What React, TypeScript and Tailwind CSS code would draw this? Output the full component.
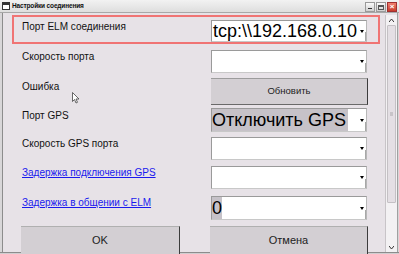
import React from "react";

const Arrow = () => (
  <svg width="4" height="3" viewBox="0 0 4 3" className="shrink-0">
    <path d="M0 0 H4 L2 3 Z" fill="#000" />
  </svg>
);

const Combo = ({ children, h = "h-[23px]" }: { children?: React.ReactNode; h?: string }) => (
  <div className={`w-[156px] ${h} bg-white border-t border-l border-[#9a9a9a] border-r border-b border-r-[#b8b8b8] border-b-[#c8c8c8] flex items-center relative`}>
    <div className="flex-1 min-w-0 h-full flex items-center overflow-hidden">{children}</div>
    <div className="w-[8px] h-full flex items-center justify-center relative">
      <Arrow />
      <div className="absolute right-0 bottom-0 w-px h-[9px] bg-[#a8a8a8]" />
    </div>
  </div>
);

const Label = ({ children, link }: { children: React.ReactNode; link?: boolean }) => (
  <div
    className={`w-[189px] text-[10px] leading-[12px] mt-[1px] ${
      link ? "text-[#1a1aee] underline" : "text-[#111]"
    }`}
  >
    {children}
  </div>
);

export default function App() {
  return (
    <div className="w-[399px] h-[254px] overflow-hidden bg-[#e7e2e7] flex flex-col font-['Liberation_Sans',Arial,sans-serif] relative">
      {/* title bar */}
      <div className="h-[13px] bg-gradient-to-b from-[#f2f2f2] to-[#dedede] border-b border-[#a8a8a8] flex items-center relative">
        <div className="ml-[2px] w-[8px] h-[8px] border border-[#333] bg-white flex items-start">
          <div className="w-full h-[2px] bg-[#333]" />
        </div>
        <span className="ml-[2px] text-[6.5px] font-bold text-[#111] leading-none tracking-[-0.15px]">
          Настройки соединения
        </span>
        <div className="absolute right-[2px] top-[2px] flex gap-[1px]">
          <div className="w-[10px] h-[10px] bg-gradient-to-b from-[#fafafa] to-[#d0d0d0] border border-[#9a9a9a] flex items-end justify-center pb-[2px]">
            <div className="w-[4px] h-[1.5px] bg-[#333]" />
          </div>
          <div className="w-[10px] h-[10px] bg-gradient-to-b from-[#fafafa] to-[#d0d0d0] border border-[#9a9a9a] flex items-center justify-center">
            <div className="w-[6px] h-[5px] border border-[#555] border-t-2" />
          </div>
          <div className="w-[10px] h-[10px] bg-gradient-to-b from-[#f08070] to-[#c83a2a] border border-[#a03030] flex items-center justify-center text-white text-[8px] leading-none font-bold">
            ×
          </div>
        </div>
      </div>

      <div className="flex flex-1 min-h-0">
        {/* left frame */}
        <div className="w-[3px] bg-[#d8d6d8] border-r border-[#8c8c8c]" />

        {/* content */}
        <div className="flex-1 flex flex-col relative">
          {/* row 1 in red box */}
          <div className="mt-[2px] ml-[9px] w-[368px] h-[29px] border-2 border-[#f07474] pl-[8px] flex items-start pt-[3px]">
            <Label>Порт ELM соединения</Label>
            <Combo h="h-[22px]">
              <span className="text-[18px] leading-none text-black pl-[1px] whitespace-nowrap">tcp:\\192.168.0.10</span>
            </Combo>
          </div>

          <div className="mt-[6px] ml-[9px] pl-[10px] flex items-start">
            <Label>Скорость порта</Label>
            <Combo />
          </div>

          <div className="mt-[5px] ml-[9px] pl-[10px] flex items-start">
            <div className="w-[189px] text-[10px] leading-[12px] mt-[3px] text-[#111]">Ошибка</div>
            <div className="w-[157px] h-[27px] bg-[#d3cfd3] border-t border-[#9c9c9c] border-r border-r-[#3c3c3c] border-b border-b-[#6a6a6a] flex items-center justify-center text-[9.5px] text-[#222]">
              Обновить
            </div>
          </div>

          <div className="mt-[3px] ml-[9px] pl-[10px] flex items-start">
            <div className="w-[189px] text-[10px] leading-[12px] mt-[2px] text-[#111]">Порт GPS</div>
            <Combo h="h-[24px]">
              <span className="text-[18px] leading-[22px] h-[22px] bg-[#c6c2c8] text-black pr-[2px] whitespace-nowrap">Отключить GPS</span>
            </Combo>
          </div>

          <div className="mt-[5px] ml-[9px] pl-[10px] flex items-start">
            <Label>Скорость GPS порта</Label>
            <Combo />
          </div>

          <div className="mt-[6px] ml-[9px] pl-[10px] flex items-start">
            <Label link>Задержка подключения GPS</Label>
            <Combo />
          </div>

          <div className="mt-[7px] ml-[9px] pl-[10px] flex items-start">
            <Label link>Задержка в общении с ELM</Label>
            <Combo h="h-[24px]">
              <span className="text-[18px] leading-[22px] h-[22px] bg-[#c6c2c8] text-black whitespace-nowrap">0</span>
            </Combo>
          </div>

          <div className="mt-[6px] ml-[18px] flex items-start gap-[30px]">
            <div className="w-[159px] h-[28px] bg-[#d3cfd3] border-t border-[#b0b0b0] border-r border-r-[#3c3c3c] flex items-center justify-center text-[11px] text-[#222]">
              OK
            </div>
            <div className="w-[158px] h-[28px] bg-[#d3cfd3] border-t border-[#b0b0b0] border-r border-r-[#3c3c3c] flex items-center justify-center text-[11px] text-[#222]">
              Отмена
            </div>
          </div>

          {/* cursor */}
          <svg className="absolute left-[69px] top-[79px]" width="8" height="12" viewBox="0 0 8 12">
            <path d="M0.5 0.5 L0.5 9.5 L2.5 7.5 L4 11 L5.5 10.3 L4 7 L7 7 Z" fill="#fff" stroke="#444" strokeWidth="0.8" />
          </svg>
        </div>

        {/* scrollbar */}
        <div className="w-[12px] mt-[2px] bg-[#f3f1f3] border-l border-[#c8c4c8] flex flex-col">
          <div className="h-[10px] flex items-center justify-center">
            <svg width="5" height="3" viewBox="0 0 5 3"><path d="M0 3 L2.5 0 L5 3" fill="none" stroke="#333" strokeWidth="1" /></svg>
          </div>
          <div className="h-[178px] mx-[1px] bg-[#e4dfe4] border border-[#c4c0c4] rounded-[1px] flex items-center justify-center">
            <div className="w-[3px] h-[4px] bg-[#c8c4c8]" />
          </div>
          <div className="flex-1" />
          <div className="h-[10px] flex items-center justify-center">
            <svg width="5" height="3" viewBox="0 0 5 3"><path d="M0 0 L2.5 3 L5 0" fill="none" stroke="#333" strokeWidth="1" /></svg>
          </div>
        </div>

        {/* right frame */}
        <div className="w-[2px] bg-[#d8d6d8] border-l border-[#a0a0a0]" />
      </div>
      <div className="h-[2px] bg-[#d0ced0] border-t border-[#8c8c8c]" />
    </div>
  );
}
